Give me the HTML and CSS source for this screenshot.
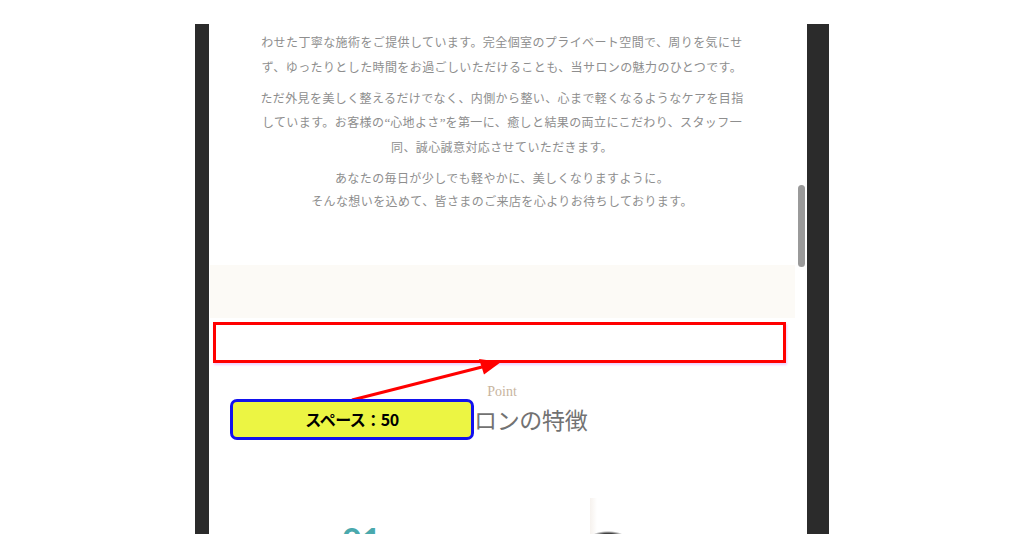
FILE: index.html
```html
<!DOCTYPE html>
<html lang="ja">

<head>
    <meta charset="utf-8">
    <title>スペース：50</title>
    <link rel="stylesheet" href="styles.css">
</head>

<body>
    <div class="screen">
        <div class="page">
            <section class="intro">
                <p>わせた丁寧な施術をご提供しています。完全個室のプライベート空間で、周りを気にせ<br>ず、ゆったりとした時間をお過ごしいただけることも、当サロンの魅力のひとつです。</p>
                <p class="tight">ただ外見を美しく整えるだけでなく、内側から整い、心まで軽くなるようなケアを目指<br>しています。お客様の<span class="q">“</span>心地よさ<span class="q">”</span>を第一に、癒しと結果の両立にこだわり、スタッフ一<br>同、誠心誠意対応させていただきます。</p>
                <p class="closing">あなたの毎日が少しでも軽やかに、美しくなりますように。<br>そんな想いを込めて、皆さまのご来店を心よりお待ちしております。</p>
            </section>

            <div class="band"></div>

            <section class="features">
                <p class="eyebrow">Point</p>
                <h2>当サロンの特徴</h2>
                <div class="feature">
                    <span class="num">01</span>
                    <div class="photo"></div>
                </div>
            </section>
        </div>

        <div class="scrollbar">
            <div class="thumb"></div>
        </div>

        <!-- annotation overlay -->
        <div class="note-box"></div>
        <svg class="note-arrow" width="634" height="510" viewBox="0 0 634 510">
            <line x1="157" y1="376" x2="287" y2="343" stroke="#ff0000" stroke-width="3" />
            <polygon points="306,338 289,350.5 284,335" fill="#ff0000" />
        </svg>
        <div class="note-label">スペース：50</div>
    </div>
</body>

</html>
```

FILE: styles.css
```css
body {
    margin: 0;
    height: 559px;
    overflow: hidden;
    background: #fff;
    font-family: "Noto Sans CJK JP", sans-serif;
}

.screen {
    position: relative;
    display: flex;
    box-sizing: border-box;
    width: 634px;
    height: 510px;
    margin: 24px 0 0 195px;
    padding: 0 22px 0 14px;
    background: #2b2b2b;
    overflow: hidden;
}

.page {
    width: 586px;
    background: #fff;
}

.intro {
    padding: 5px 0 53px;
    text-align: center;
    color: #8e8e8e;
    font-size: 12px;
    letter-spacing: 0.4px;
}

.intro p {
    margin: 0 0 7px;
    line-height: 25px;
}

.intro p.tight {
    line-height: 24px;
}

.intro p.closing {
    margin: 0;
    line-height: 23px;
}

.q {
    font-family: "Liberation Serif", serif;
    font-size: 13px;
    letter-spacing: 0;
}

.band {
    height: 53px;
    margin-left: 1px;
    background: #fcfaf6;
}

.features {
    padding-top: 64px;
    text-align: center;
}

.eyebrow {
    margin: 0;
    font-family: "Liberation Serif", serif;
    font-size: 14px;
    line-height: 20px;
    color: #c8b49e;
}

h2 {
    margin: 2px 0 0 12px;
    font-size: 23px;
    font-weight: 400;
    line-height: 30px;
    color: #727272;
    letter-spacing: -0.3px;
}

.feature {
    display: flex;
    align-items: flex-start;
    gap: 209px;
    margin-top: 91px;
    padding-left: 133px;
}

.num {
    font-family: Lato, sans-serif;
    font-size: 34px;
    font-weight: 700;
    line-height: 30px;
    color: #4aa9ad;
}

.photo {
    width: 190px;
    height: 80px;
    margin-top: -27px;
    background:
        radial-gradient(ellipse 16px 5px at 18px 38px, #1e1e1e 0, #444 55%, rgba(255, 255, 255, 0) 100%),
        linear-gradient(90deg, #f6f2ee 0, #fbf9f7 4px, #fff 7px);
}

.scrollbar {
    width: 12px;
    background: #fff;
}

.thumb {
    width: 7px;
    height: 82px;
    margin: 161px 0 0 3px;
    border-radius: 4px;
    background: #9a9a9a;
}

.note-box {
    position: absolute;
    left: 18px;
    top: 298px;
    width: 573px;
    height: 41px;
    box-sizing: border-box;
    border: 3px solid #ff0000;
    box-shadow: 1px 2px 2px rgba(210, 120, 255, 0.35);
}

.note-arrow {
    position: absolute;
    left: 0;
    top: 0;
}

.note-label {
    position: absolute;
    left: 35px;
    top: 375px;
    width: 244px;
    height: 41px;
    box-sizing: border-box;
    border: 3px solid #1212ee;
    border-radius: 7px;
    background: #ecf543;
    font-size: 16px;
    font-weight: 700;
    line-height: 35px;
    text-align: center;
    letter-spacing: -0.5px;
    color: #000;
}
```
